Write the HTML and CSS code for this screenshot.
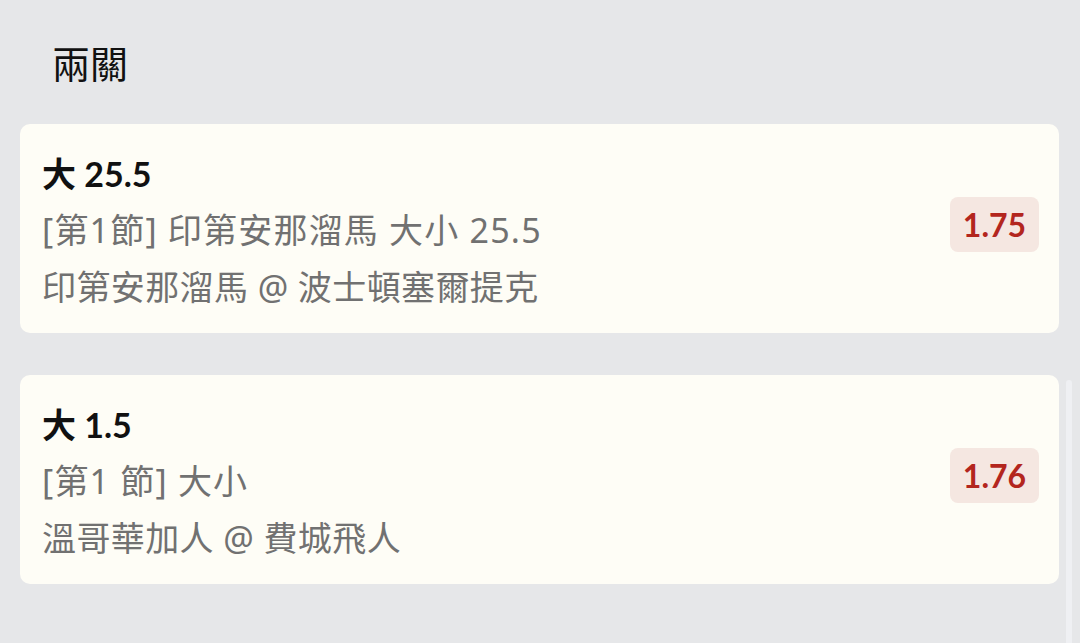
FILE: index.html
```html
<!DOCTYPE html>
<html lang="zh-Hant">
<head>
<meta charset="utf-8">
<link rel="stylesheet" href="styles.css">
</head>
<body>
<div class="page">
  <h1 class="section-title">兩關</h1>
  <div class="card">
    <div class="info">
      <div class="pick">大 25.5</div>
      <div class="market">[第1節] 印第安那溜馬 大小 25.5</div>
      <div class="match">印第安那溜馬 @ 波士頓塞爾提克</div>
    </div>
    <div class="odds">1.75</div>
  </div>
  <div class="card">
    <div class="info">
      <div class="pick">大 1.5</div>
      <div class="market">[第1 節] 大小</div>
      <div class="match">溫哥華加人 @ 費城飛人</div>
    </div>
    <div class="odds">1.76</div>
  </div>
  <div class="scrollbar"></div>
</div>
</body>
</html>
```
FILE: styles.css
```css
html, body {
  margin: 0;
  padding: 0;
  background: #e6e7e9;
}
body {
  font-family: Lato, "Noto Sans CJK TC", sans-serif;
  width: 1080px;
  height: 643px;
  overflow: hidden;
}
.page {
  position: relative;
  padding: 0 21px 0 20px;
  height: 643px;
  box-sizing: border-box;
}
.section-title {
  margin: 0 0 39px 0;
  padding: 39px 0 0 32px;
  font-size: 38px;
  line-height: 46px;
  font-weight: 400;
  color: #111;
  font-family: "Noto Sans CJK TC", sans-serif;
}
.card {
  display: flex;
  align-items: center;
  justify-content: space-between;
  background: #fefdf6;
  border-radius: 10px;
  height: 209px;
  box-sizing: border-box;
  padding: 0 20px 0 22px;
  margin-bottom: 42px;
}
.info {
  display: flex;
  flex-direction: column;
  padding-top: 4px;
}
.pick {
  font-size: 34px;
  font-weight: 700;
  color: #111;
  line-height: 57px;
}
.market, .match {
  font-family: "Noto Sans", "Noto Sans CJK TC", sans-serif;
  font-size: 34px;
  letter-spacing: 0.4px;
  color: #717171;
  line-height: 57px;
}
.market {
  letter-spacing: 1.2px;
}
.odds {
  background: #f5e7e1;
  color: #b3261e;
  font-weight: 700;
  font-size: 32px;
  border-radius: 8px;
  width: 89px;
  height: 55px;
  display: flex;
  align-items: center;
  justify-content: center;
  margin-bottom: 9px;
}
.scrollbar {
  position: absolute;
  left: 1066px;
  top: 380px;
  width: 6px;
  bottom: 0;
  background: #eff0f3;
  border-radius: 3px 3px 0 0;
}
```
